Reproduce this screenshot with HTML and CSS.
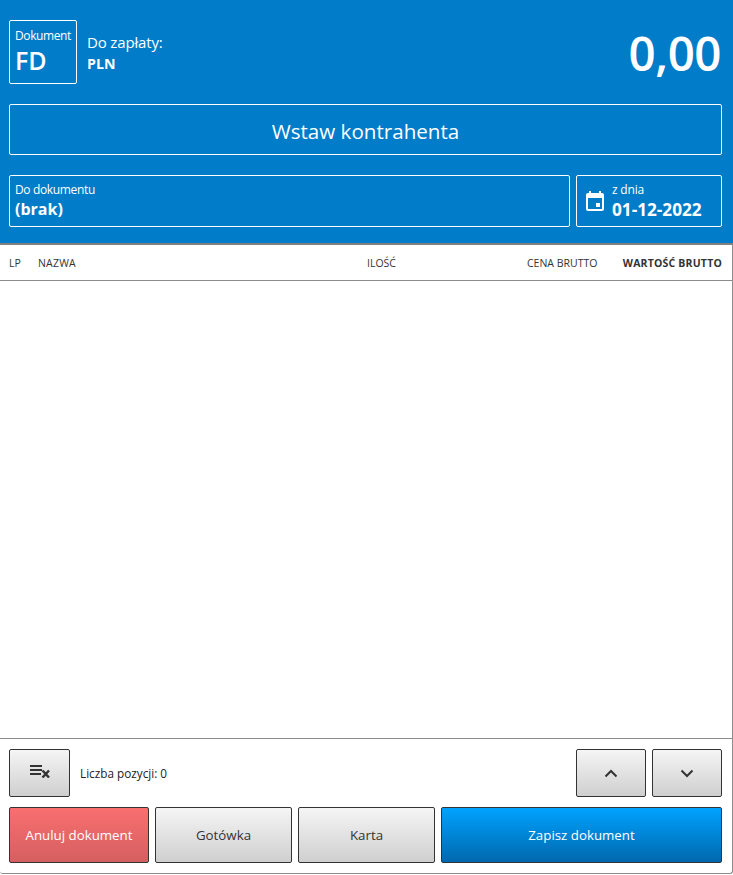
FILE: index.html
```html
<!DOCTYPE html>
<html lang="pl">
<head>
  <meta charset="UTF-8">
  <title>Dokument FD</title>
  <link rel="stylesheet" href="styles.css">
</head>
<body>
<div class="window">
  <header class="docHeader">
    <div class="topRow">
      <div class="docBox">
        <span class="docLabel">Dokument</span>
        <span class="docType">FD</span>
      </div>
      <div class="payInfo">
        <span class="payLabel">Do zapłaty:</span>
        <span class="payCurrency">PLN</span>
      </div>
      <div class="payAmount">0,00</div>
    </div>
    <div class="contractor">Wstaw kontrahenta</div>
    <div class="fieldRow">
      <div class="field fieldDoc">
        <span class="fieldLabel">Do dokumentu</span>
        <span class="fieldValue">(brak)</span>
      </div>
      <div class="field fieldDate">
        <svg class="calIcon" width="24" height="24" viewBox="0 0 24 24"><path fill="#fff" d="M19 4h-1V2h-2v2H8V2H6v2H5c-1.100 0-2 .9-2 2v14c0 1.100.9 2 2 2h14c1.100 0 2-.9 2-2V6c0-1.100-.9-2-2-2zm0 16H5V9h14v11zm-6-6h4v4h-4z"/></svg>
        <div class="dateText">
          <span class="fieldLabel">z dnia</span>
          <span class="fieldValue dateValue">01-12-2022</span>
        </div>
      </div>
    </div>
  </header>

  <div class="tableHead">
    <span class="colLp">LP</span>
    <span class="colName">NAZWA</span>
    <span class="colQty">ILOŚĆ</span>
    <span class="colPrice">CENA BRUTTO</span>
    <span class="colValue">WARTOŚĆ BRUTTO</span>
  </div>
  <div class="tableBody"></div>

  <footer class="docFooter">
    <div class="footRow">
      <button class="btn btnClear">
        <svg width="20" height="14" viewBox="0 0 20 14"><path fill="#333" d="M0 1h12v2H0zM0 5h12v2H0zM0 9h11v2H0z"/><path fill="none" stroke="#333" stroke-width="2.400" d="M12.500 6.500l6.500 7M19 6.500l-6.500 7"/></svg>
      </button>
      <span class="itemCount">Liczba pozycji: 0</span>
      <button class="btn btnArrow">
        <svg width="14" height="9" viewBox="0 0 14 9"><path fill="none" stroke="#333" stroke-width="2" d="M1.500 7.500L7 2l5.500 5.500"/></svg>
      </button>
      <button class="btn btnArrow">
        <svg width="14" height="9" viewBox="0 0 14 9"><path fill="none" stroke="#333" stroke-width="2" d="M1.500 1.500L7 7l5.500-5.500"/></svg>
      </button>
    </div>
    <div class="actionRow">
      <button class="btn btnCancel">Anuluj dokument</button>
      <button class="btn btnPay">Gotówka</button>
      <button class="btn btnPay">Karta</button>
      <button class="btn btnSave">Zapisz dokument</button>
    </div>
  </footer>
</div>
</body>
</html>
```
FILE: styles.css
```css
html, body {
    margin: 0;
    padding: 0;
    background: #fff;
}
body {
    font-family: "Open Sans", sans-serif;
    color: #333;
}
span {
    display: block;
}
.window {
    width: 733px;
    height: 874px;
    box-sizing: border-box;
    display: flex;
    flex-direction: column;
    border-right: 1px solid #8c8c8c;
    border-bottom: 1px solid #8c8c8c;
    border-radius: 0 0 3px 3px;
}
.docHeader {
    height: 245px;
    box-sizing: border-box;
    margin-right: -1px;
    padding: 20px 11px 0 9px;
    background: #017cc9;
    border-bottom: 2px solid #808080;
    color: #fff;
}
.topRow {
    display: flex;
    height: 64px;
}
.docBox {
    width: 68px;
    box-sizing: border-box;
    border: 1px solid #fff;
    border-radius: 2px;
    padding: 6px 5px;
}
.docLabel {
    font-size: 12px;
    line-height: 17px;
    letter-spacing: -0.4px;
}
.docType {
    font-size: 25px;
    line-height: 33px;
    font-weight: 600;
}
.payInfo {
    margin-left: 10px;
    padding-top: 11px;
}
.payLabel {
    font-size: 15px;
    line-height: 22px;
    letter-spacing: -0.15px;
}
.payCurrency {
    font-size: 14.200px;
    line-height: 21px;
    font-weight: 700;
}
.payAmount {
    margin-left: auto;
    margin-right: 1px;
    margin-top: -2px;
    font-size: 47.500px;
    line-height: 70px;
    font-weight: 600;
    letter-spacing: -0.5px;
}
.contractor {
    height: 51px;
    box-sizing: border-box;
    margin-top: 20px;
    border: 1px solid #fff;
    border-radius: 2px;
    font-size: 20.600px;
    line-height: 53px;
    text-align: center;
}
.fieldRow {
    display: flex;
    gap: 6px;
    margin-top: 20px;
}
.field {
    height: 52px;
    box-sizing: border-box;
    border: 1px solid #fff;
    border-radius: 2px;
}
.fieldDoc {
    flex: 1;
    padding: 5px 5px;
}
.fieldDoc .fieldLabel {
    letter-spacing: -0.35px;
}
.fieldDate {
    width: 146px;
    display: flex;
    align-items: center;
    padding-left: 6px;
}
.calIcon {
    flex: none;
}
.dateText {
    margin-left: 5px;
}
.fieldLabel {
    font-size: 12px;
    line-height: 17px;
    letter-spacing: -0.2px;
}
.fieldValue {
    font-size: 16px;
    line-height: 23px;
    font-weight: 700;
}
.dateValue {
    font-size: 17.200px;
}
.tableHead {
    display: flex;
    height: 36px;
    box-sizing: border-box;
    align-items: center;
    border-bottom: 1px solid #8c8c8c;
    margin-right: -1px;
    padding: 0 11px 0 9px;
    font-size: 10.500px;
    color: #333;
}
.colLp {
    width: 29px;
}
.colName {
    width: 329px;
    letter-spacing: 0.2px;
}
.colQty {
    width: 160px;
}
.colPrice {
    width: 95px;
}
.colValue {
    margin-left: auto;
    font-weight: 700;
    letter-spacing: 0.2px;
}
.tableBody {
    flex: 1;
}
.docFooter {
    height: 135px;
    box-sizing: border-box;
    border-top: 1px solid #8c8c8c;
    margin-right: -1px;
    padding: 10px 11px 0 9px;
}
.footRow {
    display: flex;
    align-items: center;
    gap: 6px;
}
.actionRow {
    display: flex;
    gap: 6px;
    margin-top: 10px;
}
.btn {
    box-sizing: border-box;
    border: 1px solid #333;
    border-radius: 2px;
    background: linear-gradient(#f5f5f5, #cfcfcf);
    font-family: "Open Sans", sans-serif;
    font-size: 13.300px;
    color: #333;
    padding: 0;
}
.btnClear {
    width: 61px;
    height: 48px;
}
.btnArrow {
    width: 70px;
    height: 48px;
}
.itemCount {
    margin-left: 4px;
    margin-right: auto;
    font-size: 11.750px;
    color: #222;
}
.actionRow .btn {
    height: 56px;
}
.btnCancel {
    width: 140px;
    background: linear-gradient(#f96f70, #d55f60);
    color: #fff;
}
.btnPay {
    width: 137px;
}
.btnSave {
    flex: 1;
    background: linear-gradient(#00a2fe, #0068ae);
    color: #fff;
}
```
